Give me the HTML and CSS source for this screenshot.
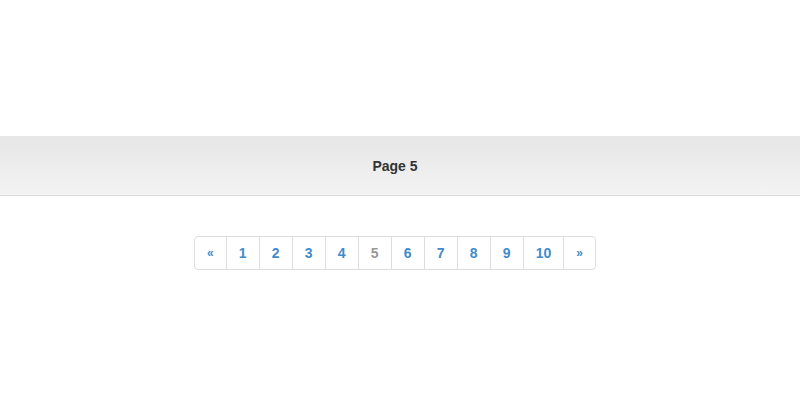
FILE: index.html
```html
<!DOCTYPE html>
<html>
<head>
<meta charset="utf-8">
<link rel="stylesheet" href="styles.css">
</head>
<body>
<div class="page">
  <header class="bar"><h1 class="title">Page 5</h1></header>
  <nav class="pager-wrap">
    <ul class="pager">
      <li><a class="item arrow">&laquo;</a></li>
      <li><a class="item">1</a></li>
      <li><a class="item">2</a></li>
      <li><a class="item">3</a></li>
      <li><a class="item">4</a></li>
      <li><a class="item current">5</a></li>
      <li><a class="item">6</a></li>
      <li><a class="item">7</a></li>
      <li><a class="item">8</a></li>
      <li><a class="item">9</a></li>
      <li><a class="item">10</a></li>
      <li><a class="item arrow">&raquo;</a></li>
    </ul>
  </nav>
</div>
</body>
</html>
```
FILE: styles.css
```css
html, body {
  margin: 0;
  padding: 0;
  background: #fff;
  font-family: "Liberation Sans", Arial, sans-serif;
}
.page {
  padding-top: 136px;
}
.bar {
  height: 59px;
  border-bottom: 1px solid #dcdcdc;
  background: linear-gradient(to bottom, #e6e6e6 0%, #f3f3f3 100%);
  display: flex;
  align-items: center;
  justify-content: center;
}
.title {
  margin: 0;
  font-size: 14px;
  font-weight: bold;
  color: #333;
  padding-right: 10px;
}
.pager-wrap {
  display: flex;
  justify-content: center;
  margin-top: 40px;
  padding-right: 10px;
}
.pager {
  list-style: none;
  margin: 0;
  padding: 0;
  display: flex;
}
.item {
  display: block;
  padding: 8px 12px;
  line-height: 16px;
  font-size: 14px;
  font-weight: bold;
  color: #428bca;
  border: 1px solid #ddd;
  margin-left: -1px;
  background: #fff;
  text-decoration: none;
  min-width: 8px;
  text-align: center;
}
.pager li:first-child .item {
  margin-left: 0;
  border-radius: 4px 0 0 4px;
}
.pager li:last-child .item {
  border-radius: 0 4px 4px 0;
}
.arrow {
  font-size: 12px;
  min-width: 0;
  padding-left: 12px;
  padding-right: 12px;
}
.current {
  color: #999;
}
```
